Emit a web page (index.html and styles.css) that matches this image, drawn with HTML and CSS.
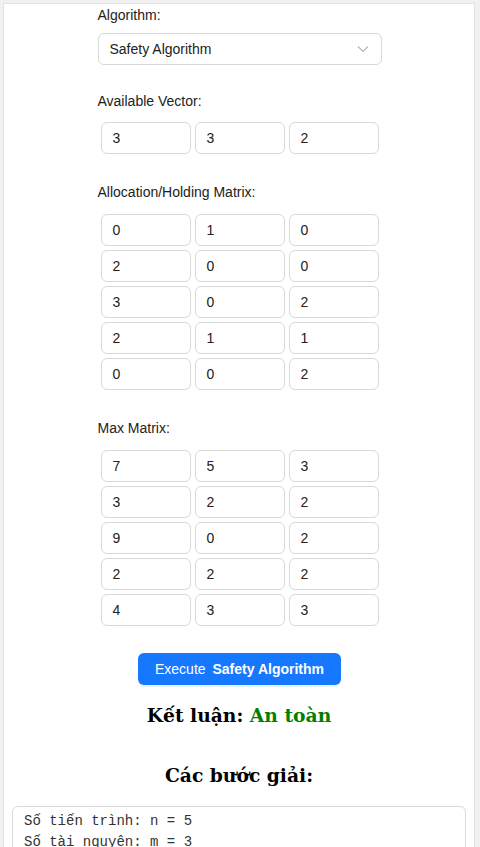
FILE: index.html
```html
<!DOCTYPE html>
<html>
<head>
<meta charset="utf-8">
<link rel="stylesheet" href="styles.css">
</head>
<body>
<div class="card">
  <div class="form">
    <div class="label first">Algorithm:</div>
    <div class="select">
      <span>Safety Algorithm</span>
      <svg class="chev" width="12" height="8" viewBox="0 0 12 8"><path d="M1 1.5 L6 6.5 L11 1.5" fill="none" stroke="#b5b5b5" stroke-width="1.1"/></svg>
    </div>

    <div class="label">Available Vector:</div>
    <div class="grid">
      <div class="cell">3</div><div class="cell">3</div><div class="cell">2</div>
    </div>

    <div class="label matrix-label">Allocation/Holding Matrix:</div>
    <div class="grid">
      <div class="cell">0</div><div class="cell">1</div><div class="cell">0</div>
      <div class="cell">2</div><div class="cell">0</div><div class="cell">0</div>
      <div class="cell">3</div><div class="cell">0</div><div class="cell">2</div>
      <div class="cell">2</div><div class="cell">1</div><div class="cell">1</div>
      <div class="cell">0</div><div class="cell">0</div><div class="cell">2</div>
    </div>

    <div class="label matrix-label">Max Matrix:</div>
    <div class="grid">
      <div class="cell">7</div><div class="cell">5</div><div class="cell">3</div>
      <div class="cell">3</div><div class="cell">2</div><div class="cell">2</div>
      <div class="cell">9</div><div class="cell">0</div><div class="cell">2</div>
      <div class="cell">2</div><div class="cell">2</div><div class="cell">2</div>
      <div class="cell">4</div><div class="cell">3</div><div class="cell">3</div>
    </div>

    <div class="btn-row">
      <button class="btn">Execute <b>Safety Algorithm</b></button>
    </div>
  </div>

  <h2 class="result">K&#x1EBF;t lu&#x1EAD;n: <span class="safe">An to&#xE0;n</span></h2>
  <h2 class="steps-title">C&#xE1;c b&#x01B0;&#x1EDB;c gi&#x1EA3;i:</h2>
  <div class="steps">S&#x1ED1; ti&#x1EBF;n tr&#xEC;nh: n = 5
S&#x1ED1; t&#xE0;i nguy&#xEA;n: m = 3</div>
</div>
</body>
</html>
```
FILE: styles.css
```css
html, body {
  margin: 0;
  padding: 0;
}
body {
  background: #f0f0f0;
  padding: 3px 5px 0 3px;
  height: 847px;
  box-sizing: border-box;
  overflow: hidden;
  font-family: "Liberation Sans", Arial, sans-serif;
  color: #222;
}
.card {
  background: #fff;
  border: 1px solid #e2e2e2;
  border-bottom: none;
  height: 844px;
  box-sizing: border-box;
  padding: 0 8px;
  display: flex;
  flex-direction: column;
}
.form {
  width: 284px;
  align-self: center;
  margin-left: 1px;
  display: flex;
  flex-direction: column;
}
.label {
  font-size: 14px;
  line-height: 16px;
  margin-top: 28px;
  margin-bottom: 13px;
  color: #222;
}
.label.first {
  margin-top: 3px;
  margin-bottom: 10px;
}
.label.matrix-label {
  margin-top: 30px;
  margin-bottom: 14px;
}
.select {
  height: 32px;
  box-sizing: border-box;
  border: 1px solid #d9d9d9;
  border-radius: 6px;
  display: flex;
  align-items: center;
  justify-content: space-between;
  padding: 0 11px;
  font-size: 14px;
}
.chev {
  margin-right: 1px;
}
.grid {
  display: grid;
  grid-template-columns: repeat(3, 90px);
  column-gap: 4px;
  row-gap: 4px;
  padding: 0 3px;
  justify-content: center;
}
.cell {
  height: 32px;
  box-sizing: border-box;
  border: 1px solid #d9d9d9;
  border-radius: 6px;
  display: flex;
  align-items: center;
  padding-left: 11px;
  font-size: 14px;
  color: #222;
}
.btn-row {
  display: flex;
  justify-content: center;
  margin-top: 27px;
}
.btn {
  width: 203px;
  height: 32px;
  border: none;
  border-radius: 6px;
  background: #1677ff;
  color: #fff;
  font-family: "Liberation Sans", Arial, sans-serif;
  font-size: 14px;
  padding: 0;
  box-shadow: 0 2px 0 rgba(5, 145, 255, 0.1);
}
.btn b {
  margin-left: 3px;
}
h2 {
  font-family: "DejaVu Serif", serif;
  font-size: 18.7px;
  font-weight: bold;
  text-align: center;
  margin: 0;
  color: #000;
}
.result {
  margin-top: 17px;
  line-height: 26px;
}
.safe {
  color: #008000;
}
.steps-title {
  margin-top: 34px;
  line-height: 26px;
}
.steps {
  margin-top: 18px;
  border: 1px solid #d9d9d9;
  border-radius: 6px;
  padding: 4px 11px;
  font-family: "Liberation Mono", monospace;
  font-size: 14px;
  line-height: 21px;
  white-space: pre;
  color: #333;
  height: 80px;
}
```
